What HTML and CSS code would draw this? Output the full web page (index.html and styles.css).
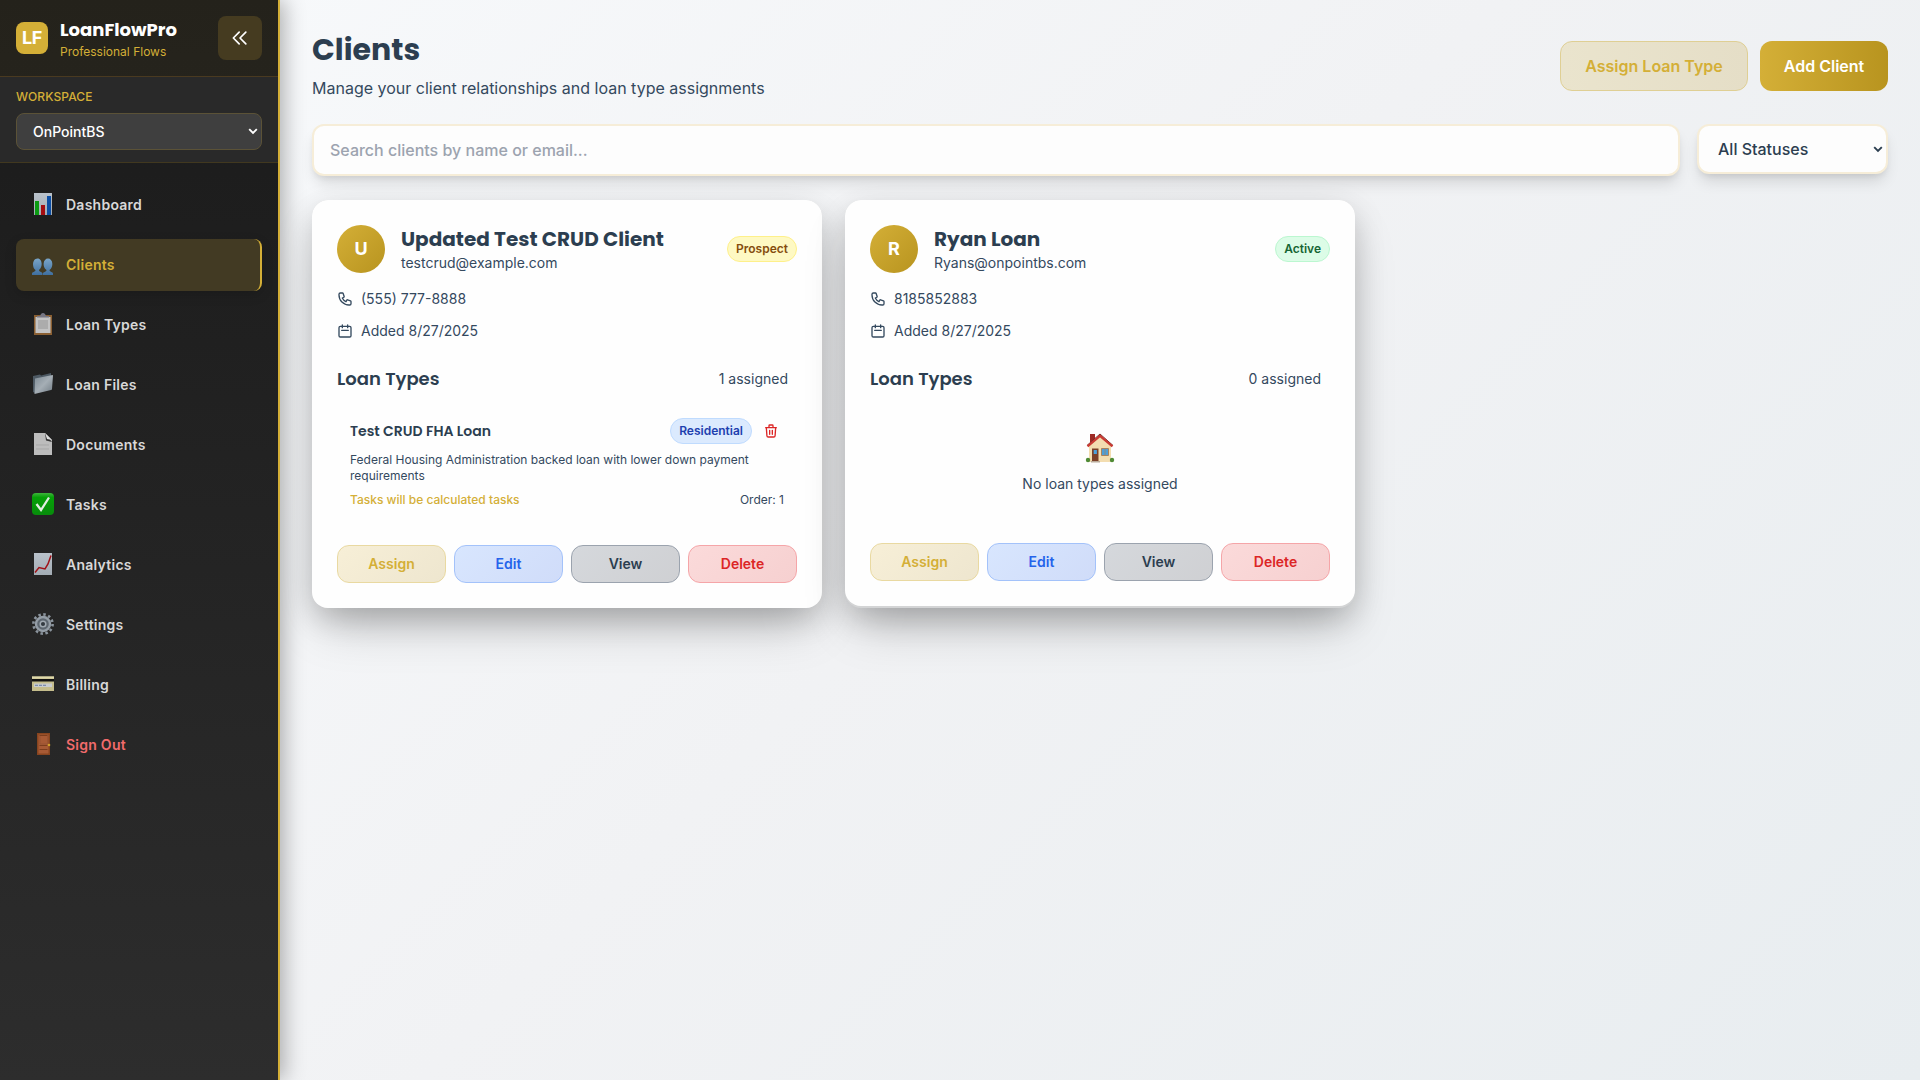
FILE: index.html
```html
<!DOCTYPE html>
<html lang="en">
<head>
<meta charset="utf-8">
<title>Clients - LoanFlowPro</title>
<link rel="stylesheet" href="styles.css">
</head>
<body>
<svg class="sprite" aria-hidden="true">
  <defs>
    <linearGradient id="paper" x1="0" y1="0" x2="0" y2="1"><stop offset="0" stop-color="#b9c2cb"/><stop offset="1" stop-color="#a3acb4"/></linearGradient>
    <linearGradient id="blue" x1="0" y1="0" x2="0" y2="1"><stop offset="0" stop-color="#7aa5c9"/><stop offset="1" stop-color="#3f6f9f"/></linearGradient>
    <linearGradient id="steel" x1="0" y1="0" x2="1" y2="1"><stop offset="0" stop-color="#7d8a94"/><stop offset=".5" stop-color="#a5aeb5"/><stop offset="1" stop-color="#707b84"/></linearGradient>
    <linearGradient id="green" x1="0" y1="0" x2="0" y2="1"><stop offset="0" stop-color="#3fb53c"/><stop offset=".2" stop-color="#06a008"/><stop offset="1" stop-color="#078c0b"/></linearGradient>
  </defs>
  <symbol id="phone" viewBox="0 0 24 24"><path fill="none" stroke="currentColor" stroke-width="2" stroke-linecap="round" stroke-linejoin="round" d="M3 5a2 2 0 012-2h3.28a1 1 0 01.948.684l1.498 4.493a1 1 0 01-.502 1.21l-2.257 1.13a11.042 11.042 0 005.516 5.516l1.13-2.257a1 1 0 011.21-.502l4.493 1.498a1 1 0 01.684.949V19a2 2 0 01-2 2h-1C9.716 21 3 14.284 3 6V5z"/></symbol>
  <symbol id="calendar" viewBox="0 0 24 24"><path fill="none" stroke="currentColor" stroke-width="2" stroke-linecap="round" stroke-linejoin="round" d="M8 7V3m8 4V3m-9 8h10M5 21h14a2 2 0 002-2V7a2 2 0 00-2-2H5a2 2 0 00-2 2v12a2 2 0 002 2z"/></symbol>
</svg>

<div class="app">
  <aside class="sidebar">
    <header class="brand">
      <div class="brand-mark">LF</div>
      <div class="brand-text">
        <div class="brand-name">LoanFlowPro</div>
        <div class="brand-tag">Professional Flows</div>
      </div>
      <button class="collapse" aria-label="Collapse">
        <svg width="20" height="20" viewBox="0 0 24 24" fill="none" stroke="currentColor" stroke-width="2" stroke-linecap="round" stroke-linejoin="round"><path d="M11 19l-7-7 7-7m8 14l-7-7 7-7"/></svg>
      </button>
    </header>
    <section class="workspace">
      <div class="workspace-label">WORKSPACE</div>
      <div class="select-wrap">
        <select class="workspace-select"><option>OnPointBS</option></select>
        <svg class="chevron chevron-sm" width="10" height="7" viewBox="0 0 10 7"><path d="M1.2 1.2L5 5l3.8-3.8" fill="none" stroke="currentColor" stroke-width="1.9"/></svg>
      </div>
    </section>
    <nav class="nav">
      <a class="nav-item"><svg class="nav-icon" viewBox="0 0 22 22"><path fill="url(#paper)" d="M2 0h18v22H2z"/><path fill="#0a9a12" d="M3 8h4v14H3z"/><path fill="#a30d12" d="M9 12h4v10H9z"/><path fill="#0b4ea5" d="M15 3h4v19h-4z"/></svg>Dashboard</a>
      <a class="nav-item active"><svg class="nav-icon" viewBox="0 0 22 22"><g fill="url(#blue)"><path d="M11 20.500c0-1.500 3.500-1.500 3.500-3.500-4.500-3-3.500-11.500 1.500-11.500S22 14 17.500 17c0 2 3.500 2 3.500 3.500V22H11z"/><path d="M0 22v-1.500C0 19 3.500 19 3.500 17-.5 14 .5 5.500 5.500 5.500S11 14 7 17c0 2 3.500 2 3.500 3.500V22z"/></g></svg>Clients</a>
      <a class="nav-item"><svg class="nav-icon" viewBox="0 0 22 22"><path fill="#8a5f32" d="M2 2h18v20H2z"/><path fill="#c3c3c3" d="M3.500 4h15v16h-15z"/><path fill="#acacac" d="M6 7h10v9H6z"/><path fill="#777784" d="M5 3h3l1-2q2-2 4 0l1 2h3v1.500H5z"/></svg>Loan Types</a>
      <a class="nav-item"><svg class="nav-icon" viewBox="0 0 22 22"><path fill="#4d5963" d="M1 3l7-1.500 1 1L19 0v4L3 20l-2-1z"/><path fill="url(#steel)" d="M3 5.500L20.500 2q.5 0 .5.800L20 16q0 .8-1 1L2.500 21z"/></svg>Loan Files</a>
      <a class="nav-item"><svg class="nav-icon" viewBox="0 0 22 22"><path fill="#bcbcbc" d="M2 0h11l7 7v15H2z"/><path fill="#353535" d="M13 0l7 9-6-1.500z"/><path fill="#dedede" d="M13 0l7 7-5-1z"/><path stroke="#a7a7a7" d="M4 12h13M4 16h13"/></svg>Documents</a>
      <a class="nav-item"><svg class="nav-icon" viewBox="0 0 22 22"><rect width="22" height="22" rx="4" fill="url(#green)"/><path fill="none" stroke="#e2eee2" stroke-width="2.300" d="M4.500 11l4.500 6L17 4.500"/></svg>Tasks</a>
      <a class="nav-item"><svg class="nav-icon" viewBox="0 0 22 22"><path fill="url(#paper)" d="M2 0h18v22H2z"/><path fill="none" stroke="#a01218" stroke-width="1.500" d="M3 19.500l4-5 6 1.500 3-5 3-8.500"/></svg>Analytics</a>
      <a class="nav-item"><svg class="nav-icon" viewBox="0 0 22 22"><circle cx="11" cy="11" r="9.600" fill="none" stroke="#8a939c" stroke-width="2.600" stroke-dasharray="2.500 2.526"/><circle cx="11" cy="11" r="7" fill="#5d666f" stroke="#949da6" stroke-width="2.400"/><circle cx="11" cy="11" r="2.800" fill="#333a41" stroke="#a1aab2" stroke-width="1.500"/></svg>Settings</a>
      <a class="nav-item"><svg class="nav-icon" viewBox="0 0 22 22"><path fill="#c5bd8c" d="M0 3.500h22V18H0z"/><path fill="#ded8aa" d="M0 3.500h22v2H0z"/><path fill="#111" d="M0 6h22v2.500H0z"/><path fill="#c9ccd0" d="M2 10.500h18V14H2z"/><path stroke="#6b7fa5" stroke-dasharray="3 1" d="M3 12.300h12"/></svg>Billing</a>
      <a class="nav-item danger"><svg class="nav-icon" viewBox="0 0 22 22"><path fill="#87441f" d="M5 0h13v22H5z"/><path fill="#a75a35" d="M6.500 1.500h10v19h-10z"/><path fill="none" stroke="#7c3d1d" d="M7.500 2.500h8M7.500 12.500h8M7.500 16.500h8"/><path fill="none" stroke="#935030" stroke-width=".7" d="M8 3v8h7.500V3"/><circle cx="17" cy="12" r="1.300" fill="#d0a12b"/></svg>Sign Out</a>
    </nav>
  </aside>

  <main class="main">
    <header class="page-head">
      <div>
        <h1>Clients</h1>
        <p>Manage your client relationships and loan type assignments</p>
      </div>
      <div class="head-actions">
        <button class="btn btn-soft">Assign Loan Type</button>
        <button class="btn btn-gold">Add Client</button>
      </div>
    </header>

    <div class="filters">
      <input class="search" type="text" placeholder="Search clients by name or email...">
      <div class="select-wrap status-wrap">
        <select class="status"><option>All Statuses</option></select>
        <svg class="chevron chevron-status" width="10" height="7" viewBox="0 0 10 7"><path d="M1.200 1.200L5 5l3.800-3.800" fill="none" stroke="currentColor" stroke-width="1.900"/></svg>
      </div>
    </div>

    <div class="cards">
      <div class="card-shell">
        <article class="card">
          <div class="client">
            <div class="avatar">U</div>
            <div class="client-text"><h2>Updated Test CRUD Client</h2><div class="email">testcrud@example.com</div></div>
            <span class="badge prospect">Prospect</span>
          </div>
          <div class="meta">
            <div class="meta-row"><svg><use href="#phone"/></svg>(555) 777-8888</div>
            <div class="meta-row"><svg><use href="#calendar"/></svg>Added 8/27/2025</div>
          </div>
          <div class="section-head"><h3>Loan Types</h3><span>1 assigned</span></div>
          <div class="loan">
            <div class="loan-top">
              <h4>Test CRUD FHA Loan</h4>
              <span class="badge residential">Residential</span>
              <svg class="trash" viewBox="0 0 24 24" fill="none" stroke="currentColor" stroke-width="2" stroke-linecap="round" stroke-linejoin="round"><path d="M19 7l-.867 12.142A2 2 0 0116.138 21H7.862a2 2 0 01-1.995-1.858L5 7m5 4v6m4-6v6m1-10V4a1 1 0 00-1-1h-4a1 1 0 00-1 1v3M4 7h16"/></svg>
            </div>
            <p class="loan-desc">Federal Housing Administration backed loan with lower down payment requirements</p>
            <div class="loan-foot"><span class="tasks">Tasks will be calculated tasks</span><span>Order: 1</span></div>
          </div>
          <div class="actions">
            <button class="act assign">Assign</button><button class="act edit">Edit</button><button class="act view">View</button><button class="act delete">Delete</button>
          </div>
        </article>
      </div>

      <div class="card-shell">
        <article class="card">
          <div class="client">
            <div class="avatar">R</div>
            <div class="client-text"><h2>Ryan Loan</h2><div class="email">Ryans@onpointbs.com</div></div>
            <span class="badge active-badge">Active</span>
          </div>
          <div class="meta">
            <div class="meta-row"><svg><use href="#phone"/></svg>8185852883</div>
            <div class="meta-row"><svg><use href="#calendar"/></svg>Added 8/27/2025</div>
          </div>
          <div class="section-head"><h3>Loan Types</h3><span>0 assigned</span></div>
          <div class="empty">
            <svg width="30" height="30" viewBox="0 0 30 30"><path fill="#9c2a25" d="M5 1h5v9H5z"/><path fill="#f3ddb0" d="M4 12L15 2.500 26 12v17H4z"/><path fill="none" stroke="#5b2723" stroke-width="1" d="M2 12.500L15 1l13 11.500"/><path fill="none" stroke="#c93a33" stroke-width="2.400" d="M2.500 13.300L15 2.800l12.500 10.500"/><path fill="#7a4029" d="M7 15.500h6.500V29H7z"/><path fill="#4aa0dc" d="M8.700 17h3.200v4H8.700z"/><path fill="#4d9fd8" stroke="#a9835d" d="M16.500 15.500h7v7h-7z"/><path stroke="#a9835d" stroke-width=".7" d="M20 15.500v7"/><path fill="#b9aa99" d="M6 28h9v1.500H6z"/><g fill="#4f8a35"><circle cx="3" cy="27" r="2.200"/><circle cx="27" cy="27" r="2.200"/></g></svg>
            <div>No loan types assigned</div>
          </div>
          <div class="actions">
            <button class="act assign">Assign</button><button class="act edit">Edit</button><button class="act view">View</button><button class="act delete">Delete</button>
          </div>
        </article>
      </div>
    </div>
  </main>
</div>
</body>
</html>
```
FILE: styles.css
```css
* { box-sizing: border-box; margin: 0; }
body { font-family: Inter, "Liberation Sans", sans-serif; color: #2c3e50; line-height: 1.5; }
button, input, select { font: inherit; color: inherit; border: 0; }
h1, h2, h3, h4, .brand-name { font-family: Poppins, Inter, sans-serif; }
.sprite { position: absolute; width: 0; height: 0; }
.app { display: flex; height: 1080px; overflow: hidden; background: linear-gradient(135deg, #f8fafc 0%, #f1f2f4 50%, #e8edf0 100%); }

.sidebar { position: relative; z-index: 1; width: 280px; flex: none; border-right: 2px solid #d4af37; background: linear-gradient(180deg, #1a1a1a, #2d2d2d); box-shadow: 4px 0 20px rgba(0,0,0,.3); }
.brand { display: flex; align-items: center; height: 77px; padding: 0 16px; border-bottom: 1px solid #4a3a20; background: rgba(212,175,55,.06); }
.brand-mark { width: 32px; height: 32px; border-radius: 8px; background: #d4af37; color: #fff; font-weight: 700; font-size: 18px; line-height: 32px; text-align: center; letter-spacing: -.3px; }
.brand-text { flex: 1; margin-left: 12px; padding-top: 2px; }
.brand-name { font-size: 18px; font-weight: 700; line-height: 26px; color: #fff; }
.brand-tag { font-size: 12px; line-height: 18px; color: #d4af37; }
.collapse { display: grid; place-items: center; width: 44px; height: 44px; padding: 0; border-radius: 8px; background: #453b20; color: #fff; }
.workspace { height: 86px; padding: 11px 16px 12px; border-bottom: 1px solid #41381f; background: #292929; }
.workspace-label { font-size: 12px; font-weight: 500; line-height: 18px; color: #d4af37; margin-bottom: 7px; letter-spacing: .1px; }
.select-wrap { position: relative; }
.select-wrap select { display: block; width: 100%; appearance: none; }
.workspace-select { height: 37px; padding: 0 16px; border: 1px solid #5b5237; border-radius: 8px; background: #3f3f3f; color: #fff; font-size: 14px; font-weight: 500; }
.chevron { position: absolute; right: 4px; top: 50%; margin-top: -4px; color: #2c3e50; }
.chevron-sm { color: #fff; }
.chevron-status { right: 5px; margin-top: -3px; }
.nav { display: flex; flex-direction: column; gap: 8px; padding: 16px; }
.nav-item { display: flex; align-items: center; gap: 12px; height: 52px; padding: 0 16px 2px; border-radius: 8px; border-right: 2px solid transparent; color: #d8d8d8; font-size: 14px; font-weight: 600; letter-spacing: .25px; }
.nav-icon { width: 22px; height: 22px; }
.nav-item.active { background: #423a23; color: #d4af37; border-right-color: #d4af37; box-shadow: 0 4px 12px rgba(0,0,0,.15); }
.nav-item.danger { color: #f26b6b; }

.main { flex: 1; padding: 32px; min-width: 0; }
.page-head { display: flex; justify-content: space-between; align-items: center; height: 68px; margin-bottom: 24px; }
h1 { font-size: 30px; font-weight: 700; line-height: 36px; }
.page-head p { margin-top: 8px; line-height: 24px; color: #34495e; }
.head-actions { display: flex; gap: 12px; }
.btn { height: 50px; padding: 0; border-radius: 12px; font-size: 16px; font-weight: 600; }
.btn-soft { width: 188px; border: 1px solid #dfcf94; background: linear-gradient(90deg, #eae4cd, #e5dec7); color: #d4af37; }
.btn-gold { width: 128px; background: linear-gradient(90deg, #d4af37, #b8941f); color: #fff; }
.filters { display: flex; gap: 17px; align-items: flex-start; height: 52px; margin-bottom: 24px; }
.search, .status { border: 2px solid #f6edd8; border-radius: 12px; background: #fdfdfd; font-size: 16px; font-weight: 500; box-shadow: 0 10px 15px -3px rgba(0,0,0,.12), 0 4px 6px -2px rgba(0,0,0,.08); }
.search { flex: 1; height: 52px; padding: 0 16px; }
.search::placeholder { color: #9ca3af; }
.status-wrap { width: 191px; }
.status { height: 50px; padding: 0 19px; }

.cards { display: grid; grid-template-columns: repeat(3, 1fr); gap: 23px; }
.card-shell { border-radius: 16px; background: #d3d4d5; box-shadow: 0 25px 50px -12px rgba(0,0,0,.25), 0 10px 30px rgba(0,0,0,.17); }
.card { padding: 25px; border-radius: 16px; background: #fefefe; }
.client { display: flex; align-items: center; height: 48px; }
.avatar { width: 48px; height: 48px; border-radius: 50%; background: linear-gradient(135deg, #d4af37, #b8941f); color: #fff; font-size: 18px; font-weight: 700; line-height: 48px; text-align: center; }
.client-text { flex: 1; margin-left: 16px; }
h2 { font-size: 20px; font-weight: 700; line-height: 28px; }
.email { font-size: 14px; line-height: 20px; color: #34495e; }
.badge { height: 26px; padding: 0 8px; border: 1px solid; border-radius: 13px; font-size: 12px; font-weight: 600; line-height: 24px; }
.prospect { background: #fef9c3; border-color: #fef08a; color: #854d0e; }
.active-badge { background: #dcfce7; border-color: #bbf7d0; color: #166534; }
.residential { background: #dbeafe; border-color: #bfdbfe; color: #1e40af; }
.meta { display: flex; flex-direction: column; gap: 12px; margin-top: 15px; }
.meta-row { display: flex; align-items: center; gap: 8px; height: 20px; font-size: 14px; color: #34495e; }
.meta-row svg { width: 16px; height: 16px; margin-top: 1px; }
.section-head { display: flex; justify-content: space-between; align-items: center; height: 28px; margin-top: 24px; }
h3 { font-size: 18px; font-weight: 600; }
.section-head span { padding-right: 9px; font-size: 14px; color: #34495e; }
.loan { height: 116px; margin-top: 13px; padding: 13px 13px 12px; }
.loan-top { display: flex; align-items: center; height: 26px; }
h4 { flex: 1; font-size: 14px; font-weight: 600; }
.trash { width: 16px; height: 16px; margin: 0 5px 0 11px; color: #dc2626; }
.loan-desc { margin-top: 8px; font-size: 12px; line-height: 16px; color: #34495e; }
.loan-foot { display: flex; justify-content: space-between; margin-top: 8px; font-size: 12px; line-height: 16px; color: #34495e; }
.tasks { color: #d4af37; font-weight: 500; }
.empty { display: flex; flex-direction: column; align-items: center; height: 114px; margin-top: 13px; padding-top: 28px; font-size: 14px; line-height: 20px; color: #34495e; }
.empty div { margin-top: 11px; }
.actions { display: grid; grid-template-columns: repeat(4, 1fr); gap: 8px; margin-top: 24px; }
.act { height: 38px; padding: 0 0 1px; border: 1px solid; border-radius: 12px; font-size: 14px; font-weight: 600; }
.assign { background: linear-gradient(135deg, #f7efd7, #eee6cf); border-color: #e9d9a1; color: #d4af37; }
.edit { background: linear-gradient(135deg, #d8e6fe, #d0dcf9); border-color: #a3c2fa; color: #2563eb; }
.view { background: linear-gradient(135deg, #d5d8dc, #cfd0d3); border-color: #9ba3ae; color: #2c3e50; }
.delete { background: linear-gradient(135deg, #fbdada, #f6d0d0); border-color: #f5a5a8; color: #dc2626; }
```
